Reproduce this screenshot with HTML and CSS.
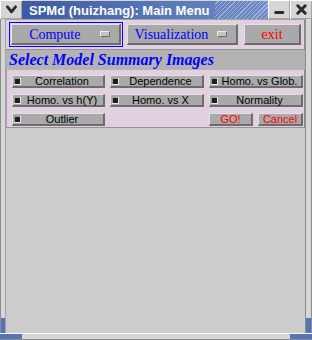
FILE: index.html
```html
<!DOCTYPE html>
<html lang="en">
<head>
    <meta charset="UTF-8" />
    <title>SPMd (huizhang): Main Menu</title>
    <link rel="stylesheet" href="styles.css">
</head>
<body>
    <div class="window">
        <div class="titlebar">
            <div class="tb-btn">
                <svg width="11" height="9" viewBox="0 0 11 9">
                    <path d="M1.5 1.8 L5.5 6.8 L9.5 1.8" />
                </svg>
            </div>
            <div class="title">
                <span class="title-text">SPMd (huizhang): Main Menu</span>
                <span class="stripes"></span>
            </div>
            <div class="tb-btn min">
                <svg width="11" height="5" viewBox="0 0 11 5">
                    <path d="M1.8 2.5 L8.8 2.5" />
                </svg>
            </div>
            <div class="tb-btn close">
                <svg width="11" height="11" viewBox="0 0 11 11">
                    <path d="M1.8 1.8 L9.2 9.2 M9.2 1.8 L1.8 9.2" />
                </svg>
            </div>
        </div>

        <div class="middle">
            <div class="side left"></div>
            <div class="client">
                <div class="menubar">
                    <div class="ring focus compute">
                        <div class="mface">
                            <span class="mlabel blue">Compute</span>
                            <span class="ind-box"><span class="ind"></span></span>
                        </div>
                    </div>
                    <div class="ring visual">
                        <div class="mface">
                            <span class="mlabel blue">Visualization</span>
                            <span class="ind-box"><span class="ind"></span></span>
                        </div>
                    </div>
                    <div class="ring exit">
                        <div class="mface">
                            <span class="mlabel red">exit</span>
                        </div>
                    </div>
                </div>

                <div class="heading">Select Model Summary Images</div>

                <div class="panel">
                    <div class="cb"><span class="check"></span><span class="cb-label">Correlation</span></div>
                    <div class="cb"><span class="check"></span><span class="cb-label">Dependence</span></div>
                    <div class="cb"><span class="check"></span><span class="cb-label">Homo. vs Glob.</span></div>
                    <div class="cb"><span class="check"></span><span class="cb-label">Homo. vs h(Y)</span></div>
                    <div class="cb"><span class="check"></span><span class="cb-label">Homo. vs X</span></div>
                    <div class="cb"><span class="check"></span><span class="cb-label">Normality</span></div>
                    <div class="cb"><span class="check"></span><span class="cb-label">Outlier</span></div>
                    <div></div>
                    <div class="actions">
                        <div class="btn go">GO!</div>
                        <div class="btn cancel">Cancel</div>
                    </div>
                </div>

                <div class="rest"></div>
            </div>
            <div class="side right"></div>
        </div>

        <div class="bottom">
            <div class="corner"></div>
            <div class="edge"></div>
            <div class="corner"></div>
        </div>
    </div>
</body>
</html>
```

FILE: styles.css
```css
* {
    box-sizing: border-box;
}
body {
    margin: 0;
    background: #ffffff;
}
.window {
    width: 312px;
    height: 340px;
    display: flex;
    flex-direction: column;
    background: #d6d6d6;
    font-family: "Liberation Sans", Arial, sans-serif;
}

/* title bar */
.titlebar {
    height: 19px;
    display: flex;
    background: #d6d6d6;
}
.tb-btn {
    width: 22px;
    display: flex;
    align-items: center;
    justify-content: center;
    box-shadow: inset 1px 1px 0 #ffffff, inset -1px -1px 0 #a4a4a4;
}
.tb-btn svg {
    stroke: #2b2b2b;
    stroke-width: 2.8;
    fill: none;
    stroke-linecap: round;
    stroke-linejoin: round;
}
.tb-btn.min svg {
    stroke-width: 3.2;
    margin-top: 6px;
}
.tb-btn.close svg {
    stroke-width: 3;
}
.title {
    width: 246px;
    margin-top: 1px;
    display: flex;
    align-items: center;
    background: linear-gradient(to right, #3c5ba2, #5a79b9 60%, #6f8bc6);
    color: #ffffff;
    font-weight: bold;
    font-size: 13px;
    padding-left: 7px;
    white-space: nowrap;
}
.stripes {
    flex: 1;
    align-self: stretch;
    margin-left: 5px;
    background: repeating-linear-gradient(135deg, transparent 0 2px, rgba(200, 215, 245, 0.55) 2px 3px);
}

/* frame */
.middle {
    flex: 1;
    display: flex;
}
.side {
    background: linear-gradient(to bottom, #d6d6d6 calc(100% - 15px), #5675b6 calc(100% - 15px));
}
.side.left {
    width: 6px;
    border-left: 1px solid #8c8c8c;
    border-right: 1px solid #a2a2a2;
}
.side.right {
    width: 7px;
    border-left: 1px solid #8c8c8c;
    border-right: 1px solid #8c8c8c;
}
.bottom {
    height: 7px;
    display: flex;
    border-bottom: 1px solid #8c8c8c;
}
.corner {
    width: 22px;
    background: #5675b6;
    border-top: 1px solid #ffffff;
}
.edge {
    flex: 1;
    background: #d6d6d6;
    border-top: 1px solid #ffffff;
}

/* client area */
.client {
    width: 299px;
    display: flex;
    flex-direction: column;
    background: #cccccc;
    border-top: 1px solid #a2a2a2;
}
.menubar {
    height: 30px;
    display: flex;
    gap: 2px;
    padding: 2px 1px 2px 3px;
    background: #e0d0e0;
    border-right: 1px solid #8c8c8c;
    border-bottom: 1px solid #9a8f9a;
}
.ring {
    padding: 2px;
}
.ring.focus {
    padding: 1px;
    border: 1px solid #0000ff;
}
.compute { width: 114px; }
.visual { width: 116px; }
.exit { width: 61px; }
.mface {
    height: 100%;
    display: flex;
    align-items: center;
    background: #a9a9a9;
    border-style: solid;
    border-width: 1px 2px 2px 1px;
    border-color: #e2e2e2 #6c6c6c #6c6c6c #e2e2e2;
    font-family: "Liberation Serif", "Times New Roman", serif;
    font-size: 14px;
}
.mlabel {
    flex: 1;
    text-align: center;
    padding-top: 1px;
}
.blue { color: #0000ff; }
.red { color: #ff0000; }
.ind-box {
    width: 21px;
    display: flex;
    padding-left: 2px;
}
.ind {
    width: 10px;
    height: 6px;
    background: #c4c4c4;
    border-style: solid;
    border-width: 1px;
    border-color: #eeeeee #6c6c6c #6c6c6c #eeeeee;
}

.heading {
    height: 20px;
    line-height: 20px;
    padding-left: 3px;
    background: #b3b3b3;
    color: #0000ff;
    font-family: "Liberation Serif", "Times New Roman", serif;
    font-weight: bold;
    font-style: italic;
    font-size: 16px;
}

.panel {
    height: 58px;
    display: grid;
    grid-template-columns: 93px 94px 94px;
    grid-template-rows: 13px 13px 13px;
    column-gap: 5px;
    row-gap: 6px;
    padding: 5px 0 0 5px;
    background: #e0d0e0;
    border-left: 1px solid #a89ea8;
    border-right: 1px solid #8c8c8c;
    border-bottom: 1px solid #9a8f9a;
}
.cb,
.btn {
    display: flex;
    align-items: center;
    background: #a9a9a9;
    border-style: solid;
    border-width: 1px 2px 2px 1px;
    border-color: #e2e2e2 #6c6c6c #6c6c6c #e2e2e2;
    font-size: 11px;
    color: #000000;
}
.check {
    width: 7px;
    height: 7px;
    margin-left: 1px;
    background: #1e1e1e;
    border-right: 1px solid #e8e8e8;
    border-bottom: 1px solid #e8e8e8;
    box-shadow: inset 1px 1px 0 #9a9a9a;
}
.cb-label {
    flex: 1;
    text-align: center;
    white-space: nowrap;
}
.actions {
    display: flex;
    gap: 5px;
}
.btn {
    justify-content: center;
    color: #ff0000;
}
.go { width: 44px; }
.cancel { width: 45px; }

.rest {
    flex: 1;
}
```
